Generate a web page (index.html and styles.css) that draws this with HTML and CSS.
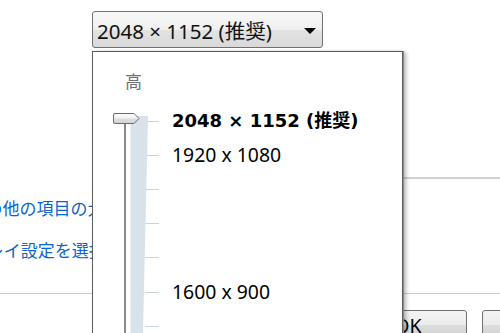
FILE: index.html
```html
<!DOCTYPE html>
<html lang="ja">
<head>
<meta charset="utf-8">
<title>画面の解像度</title>
<link rel="stylesheet" href="styles.css">
</head>
<body>
<div class="page">
  <div class="toolbar">
    <div class="select">
      <span class="select-value">2048 × 1152 (推奨)</span>
      <span class="select-arrow"></span>
    </div>
  </div>
  <div class="content">
    <div class="rule rule-right"></div>
    <div class="link link-1">テキストやその他の項目の大きさを変更します</div>
    <div class="link link-2">どのディスプレイ設定を選択しますか?</div>
    <div class="rule rule-full"></div>
    <div class="actions">
      <button class="btn">OK</button>
      <button class="btn btn-wide">キャンセル</button>
    </div>
  </div>
  <div class="menu">
    <div class="menu-high">高</div>
    <div class="menu-scale">
      <svg class="slider" width="79" height="240" viewBox="0 0 79 240">
        <defs>
          <linearGradient id="thumbGrad" x1="0" y1="0" x2="0" y2="1">
            <stop offset="0" stop-color="#fdfdfd"/>
            <stop offset="0.45" stop-color="#f1f1f1"/>
            <stop offset="0.55" stop-color="#dedede"/>
            <stop offset="1" stop-color="#d2d2d2"/>
          </linearGradient>
        </defs>
        <g stroke="#c9d3db" stroke-width="1">
          <line x1="52" y1="17.5" x2="66" y2="17.5"/>
          <line x1="52" y1="51.5" x2="66" y2="51.5"/>
          <line x1="52" y1="85.5" x2="66" y2="85.5"/>
          <line x1="52" y1="119.5" x2="66" y2="119.5"/>
          <line x1="52" y1="153.5" x2="66" y2="153.5"/>
          <line x1="52" y1="188.5" x2="66" y2="188.5"/>
          <line x1="52" y1="222.5" x2="66" y2="222.5"/>
        </g>
        <polygon points="37.5,12 55,12 49.7,240 37.5,240" fill="#d7e2ea"/>
        <line x1="32" y1="18" x2="32" y2="240" stroke="#8a8a8a" stroke-width="2"/>
        <path d="M22,9.5 H41 L46,14.5 L41,19.5 H22 A1.5,1.5 0 0 1 20.5,18 V11 A1.5,1.5 0 0 1 22,9.5 Z" fill="url(#thumbGrad)" stroke="#6a6a6a" stroke-width="1"/>
      </svg>
      <ul class="options">
        <li class="opt opt-current">2048 × 1152 (推奨)</li>
        <li class="opt">1920 x 1080</li>
        <li class="opt"></li>
        <li class="opt"></li>
        <li class="opt"></li>
        <li class="opt">1600 x 900</li>
        <li class="opt"></li>
      </ul>
    </div>
  </div>
</div>
</body>
</html>
```
FILE: styles.css
```css
body {
  margin: 0;
  background: #fff;
}

.page {
  position: relative;
  width: 500px;
  height: 333px;
  overflow: hidden;
  background: #fff;
  font-family: "Noto Sans", "Noto Sans CJK JP", sans-serif;
}

.toolbar {
  height: 48px;
  box-sizing: border-box;
  padding: 11px 0 0 92px;
}

.select {
  width: 231px;
  height: 37px;
  box-sizing: border-box;
  border: 1px solid #707070;
  border-radius: 3px;
  background: linear-gradient(#f8f8f8, #efefef 50%, #e3e3e3 51%, #d9d9d9);
  display: flex;
  align-items: center;
  justify-content: space-between;
  padding: 0 6px 0 4px;
}

.select-value {
  font-size: 20.5px;
  color: #111;
  white-space: nowrap;
}

.select-arrow {
  width: 0;
  height: 0;
  border-left: 6px solid transparent;
  border-right: 6px solid transparent;
  border-top: 6px solid #000;
  margin-top: 2px;
}

.rule-right {
  margin: 129px 0 0 300px;
  border-top: 2px solid #d0d0d0;
}

.link {
  font-family: "Noto Sans CJK JP", sans-serif;
  font-size: 17px;
  line-height: 24px;
  color: #0a64cc;
  white-space: nowrap;
  margin-top: 17px;
}

.link-1 {
  text-indent: -116px;
}

.link-2 {
  margin-top: 18px;
  text-indent: -114px;
}

.rule-full {
  margin-top: 31px;
  border-top: 1px solid #cfcfcf;
}

.actions {
  display: flex;
  gap: 15px;
  margin-top: 16px;
  padding-left: 349px;
}

.btn {
  flex: none;
  width: 118px;
  height: 30px;
  padding: 0;
  border: 1px solid #707070;
  border-radius: 3px;
  background: linear-gradient(#f4f4f4, #ebebeb 50%, #dddddd 51%, #cfcfcf);
  font-family: "Noto Sans", "Noto Sans CJK JP", sans-serif;
  font-size: 19.5px;
  color: #000;
}

.btn-wide {
  width: 150px;
}

.menu {
  position: absolute;
  left: 92px;
  top: 51px;
  width: 311px;
  height: 300px;
  box-sizing: border-box;
  border: 1px solid #5c5c5c;
  background: #fff;
  box-shadow: 1px 0 0 #8a8a8a, 3px 1px 4px rgba(0, 0, 0, 0.3);
}

.menu-high {
  height: 52px;
  box-sizing: border-box;
  padding: 18px 0 0 32px;
  font-family: "Noto Sans CJK JP", sans-serif;
  font-size: 17px;
  line-height: 22px;
  color: #6b6e72;
}

.menu-scale {
  display: flex;
}

.slider {
  display: block;
  flex: none;
}

.options {
  list-style: none;
  margin: 0;
  padding: 0;
  flex: 1;
}

.opt {
  height: 34.2px;
  line-height: 34.2px;
  font-size: 19.4px;
  color: #000;
  white-space: nowrap;
}

.opt-current {
  font-family: "DejaVu Sans", "Noto Sans CJK JP", sans-serif;
  font-weight: bold;
  font-size: 18px;
}
```
